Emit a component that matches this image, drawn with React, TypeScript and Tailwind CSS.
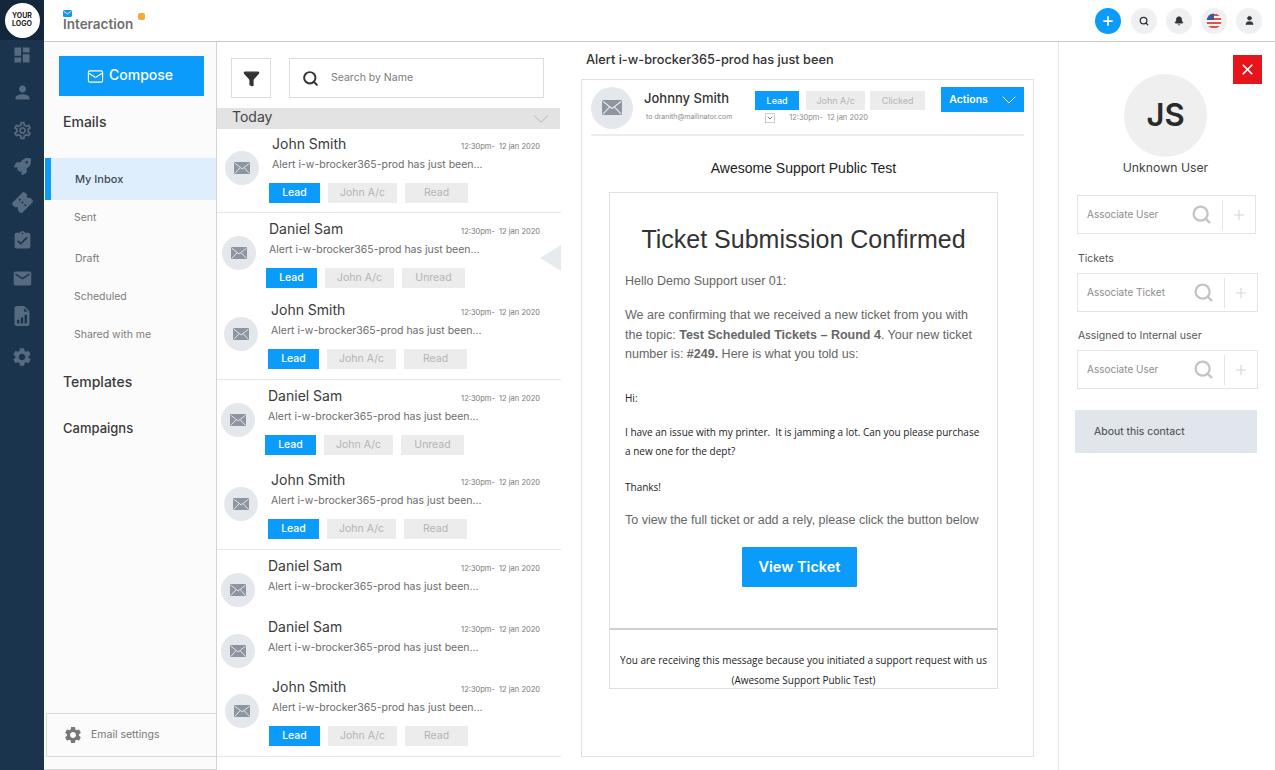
import { Search, Plus, Bell, User, X, ChevronDown, Mail, Filter } from "lucide-react";
import { MdDashboard, MdPerson, MdOutlineSettings, MdConfirmationNumber, MdAssignmentTurnedIn, MdEmail, MdSettings } from "react-icons/md";
import { FaRocket } from "react-icons/fa";
import { BsFileEarmarkBarGraphFill } from "react-icons/bs";

const SANS = "font-['Inter','Noto_Sans',sans-serif]";

// left offsets differ a bit per row, so each row carries its own
type Row = { name: string; status: string; h: number; x: number; line?: boolean };

const ROWS: Row[] = [
  { name: "John Smith", status: "Read", h: 85, x: 0, line: true },
  { name: "Daniel Sam", status: "Unread", h: 81, x: -3 },
  { name: "John Smith", status: "Read", h: 86, x: -1, line: true },
  { name: "Daniel Sam", status: "Unread", h: 84, x: -4 },
  { name: "John Smith", status: "Read", h: 86, x: -1, line: true },
  { name: "Daniel Sam", status: "", h: 61, x: -4 },
  { name: "Daniel Sam", status: "", h: 60, x: -4 },
  { name: "John Smith", status: "Read", h: 86, x: 0, line: true },
];

function EnvelopeBadge({ size = 34 }: { size?: number }) {
  return (
    <div
      className="flex shrink-0 items-center justify-center rounded-full bg-[#e4e7ec]"
      style={{ width: size, height: size }}
    >
      <svg width={size * 0.48} height={size * 0.36} viewBox="0 0 20 15">
        <rect width="20" height="15" rx="1.5" fill="#8e959e" />
        <path d="M1 1.5 10 8.5 19 1.5M1 14 7.5 7M19 14 12.5 7" fill="none" stroke="#e4e7ec" strokeWidth="1.2" />
      </svg>
    </div>
  );
}

function Tag({ label, blue, w }: { label: string; blue?: boolean; w: number }) {
  return (
    <span
      className={`flex h-[20px] items-center justify-center text-[10.5px] ${blue ? "bg-[#0a9bfb] font-medium text-white" : "bg-[#ececec] text-[#b4b4b4]"}`}
      style={{ width: w }}
    >
      {label}
    </span>
  );
}

function MessageRow({ row }: { row: Row }) {
  return (
    <div
      className={`relative flex shrink-0 flex-col ${row.line ? "border-b border-[#e6e6e6]" : ""}`}
      style={{ height: row.h, paddingLeft: row.x + 8 }}
    >
      <div className="flex items-start gap-[13px] pt-[6px]">
        <div className="pt-[17px]">
          <EnvelopeBadge />
        </div>
        <div className="min-w-0 flex-1">
          <div className="flex items-baseline justify-between pr-[21px]">
            <span className="text-[14px] leading-[20px] text-[#3a3a3a]">{row.name}</span>
            <span className="text-[7.5px] text-[#777]">12:30pm-&nbsp; 12 jan 2020</span>
          </div>
          <p className="mt-[4px] text-[10.5px] leading-[14px] text-[#6b6b6b]">Alert i-w-brocker365-prod has just been...</p>
        </div>
      </div>
      {row.status && (
        <div className="-mt-[2px] flex gap-[8px] pl-[44px]">
          <Tag label="Lead" blue w={51} />
          <Tag label="John A/c" w={69} />
          <Tag label={row.status} w={63} />
        </div>
      )}
    </div>
  );
}

function AssociateField({ label, w = 181 }: { label: string; w?: number }) {
  return (
    <div className="flex h-[39px] items-center border border-[#e4e4e4] pl-[9px] text-[10px] text-[#8c8c8c]" style={{ width: w }}>
      <span className="flex-1">{label}</span>
      <Search className="mr-[10px] h-[21px] w-[21px] text-[#c4c4c4]" strokeWidth={2.6} />
      <div className="flex h-[30px] w-[33px] items-center justify-center border-l border-[#e4e4e4]">
        <Plus className="h-[16px] w-[16px] text-[#d4d4d4]" strokeWidth={1.6} />
      </div>
    </div>
  );
}

function TopIcon({ children }: { children: React.ReactNode }) {
  return <div className="flex h-[26px] w-[26px] items-center justify-center rounded-full bg-[#eef0f2]">{children}</div>;
}

export default function App() {
  return (
    <div className={`flex h-[770px] w-[1275px] overflow-hidden bg-white ${SANS}`}>
      {/* dark icon rail */}
      <aside className="flex w-[44px] shrink-0 flex-col items-center bg-[#1b344e]">
        <div className="flex h-[40px] w-full items-center justify-center bg-[#13263a]">
          <div className="flex h-[35px] w-[35px] items-center justify-center rounded-full bg-white text-center text-[7px] font-bold leading-[8px] text-[#222]">
            YOUR<br />LOGO
          </div>
        </div>
        <div className="mt-[5px] flex flex-col items-center gap-[17px] text-[#566b7f]">
          <MdDashboard className="h-[20px] w-[20px]" />
          <MdPerson className="h-[21px] w-[21px]" />
          <MdOutlineSettings className="h-[21px] w-[21px]" />
          <FaRocket className="h-[17px] w-[17px]" />
          <MdConfirmationNumber className="h-[21px] w-[21px] -rotate-45" />
          <MdAssignmentTurnedIn className="h-[21px] w-[21px]" />
          <MdEmail className="h-[21px] w-[21px]" />
          <BsFileEarmarkBarGraphFill className="h-[20px] w-[20px]" />
          <MdSettings className="mt-[3px] h-[22px] w-[22px]" />
        </div>
      </aside>

      <div className="flex min-w-0 flex-1 flex-col">
        {/* top bar */}
        <header className="flex h-[42px] shrink-0 items-center border-b border-[#c9c9c9] pl-[19px] pr-[13px]">
          <div className="relative leading-none">
            <svg className="mb-[1px]" width="9" height="7" viewBox="0 0 9 7">
              <rect width="9" height="7" rx="1.5" fill="#1497e6" />
              <path d="M1 1.5 4.5 4 8 1.5" fill="none" stroke="#fff" strokeWidth=".8" />
            </svg>
            <div className="text-[13.5px] font-semibold text-[#6f6f6f]">Interaction</div>
            <span className="absolute left-[75px] top-[3px] h-[7px] w-[7px] rounded-[2px] bg-[#f5a93b]" />
          </div>
          <div className="ml-auto flex items-center gap-[9px]">
            <div className="mr-[1px] flex h-[26px] w-[26px] items-center justify-center rounded-full bg-[#0a9bfb]">
              <Plus className="h-[14px] w-[14px] text-white" strokeWidth={3} />
            </div>
            <TopIcon><Search className="h-[10px] w-[10px] text-[#333]" strokeWidth={3} /></TopIcon>
            <TopIcon><Bell className="h-[10px] w-[10px] fill-[#333] text-[#333]" /></TopIcon>
            <TopIcon>
              <svg width="16" height="16" viewBox="0 0 16 16">
                <clipPath id="flag"><circle cx="8" cy="8" r="7.5" /></clipPath>
                <g clipPath="url(#flag)">
                  <rect width="16" height="16" fill="#f4f4f4" />
                  <path d="M0 2h16M0 6h16M0 10h16M0 14h16" stroke="#d9534f" strokeWidth="2" />
                  <rect width="8" height="7" fill="#3f5a9a" />
                </g>
              </svg>
            </TopIcon>
            <TopIcon><User className="h-[11px] w-[11px] fill-[#333] text-[#333]" /></TopIcon>
          </div>
        </header>

        <div className="flex min-h-0 flex-1">
          {/* mailbox nav */}
          <nav className="flex w-[173px] shrink-0 flex-col border-b border-r border-[#d4d4d4] bg-[#fbfbfb]">
            <button className="ml-[15px] mt-[14px] flex h-[40px] w-[145px] items-center justify-center gap-[5px] bg-[#0a9bfb] pb-[3px] pr-[3px] text-[14px] font-medium text-white">
              <Mail className="mt-[3px] h-[17px] w-[17px]" strokeWidth={1.6} /> Compose
            </button>
            <h2 className="ml-[19px] mt-[16px] text-[14px] font-medium leading-[20px] text-[#3a3a3a]">Emails</h2>
            <div className="ml-[1px] mt-[26px] flex h-[42px] items-center border-l-[6px] border-[#0a9bfb] bg-[#deeefc] pl-[24px] text-[11px] font-medium text-[#3d4a57]">
              My Inbox
            </div>
            <div className="flex flex-col text-[10.5px] text-[#7c7c7c]">
              <span className="flex h-[35px] items-center pl-[30px]">Sent</span>
              <span className="flex h-[48px] items-center pl-[31px]">Draft</span>
              <span className="flex h-[28px] items-center pl-[30px]">Scheduled</span>
              <span className="flex h-[48px] items-center pl-[30px]">Shared with me</span>
            </div>
            <h2 className="ml-[19px] mt-[13px] text-[14px] font-medium leading-[20px] text-[#3a3a3a]">Templates</h2>
            <h2 className="ml-[19px] mt-[26px] text-[13px] font-medium leading-[20px] text-[#3a3a3a]">Campaigns</h2>
            <div className="mb-[12px] ml-[2px] mt-auto flex h-[44px] items-center gap-[8px] border-y border-l border-[#d9d9d9] pl-[16px] text-[10.5px] text-[#777]">
              <MdSettings className="h-[20px] w-[20px] text-[#777]" /> Email settings
            </div>
          </nav>

          {/* message list */}
          <section className="relative flex w-[344px] shrink-0 flex-col">
            <div className="flex h-[66px] shrink-0 items-center pl-[14px] pt-[6px]">
              <div className="flex h-[40px] w-[40px] items-center justify-center border border-[#dcdcdc]">
                <Filter className="h-[17px] w-[17px] fill-[#333] text-[#333]" />
              </div>
              <div className="ml-[18px] flex h-[40px] w-[255px] items-center border border-[#dcdcdc] pl-[12px] text-[10.5px] text-[#7c7c7c]">
                <Search className="mr-[12px] h-[17px] w-[17px] text-[#333]" strokeWidth={2.8} />
                Search by Name
              </div>
            </div>
            <div className="mr-[1px] flex h-[21px] shrink-0 items-center justify-between bg-[#e3e3e3] pb-[4px] pl-[15px] pr-[6px] text-[14px] text-[#444]">
              Today
              <ChevronDown className="mt-[4px] h-[26px] w-[26px] text-[#aaa]" strokeWidth={0.8} />
            </div>
            <div className="-mt-[1px] flex flex-col">
              {ROWS.map((row, i) => (
                <MessageRow key={i} row={row} />
              ))}
            </div>
            {/* collapse handle over the list's edge */}
            <div className="absolute right-0 top-[203px] h-0 w-0 border-y-[13px] border-r-[21px] border-y-transparent border-r-[#e8ebee]" />
          </section>

          {/* reading pane */}
          <main className="flex w-[497px] shrink-0 flex-col pl-[20px] pr-[24px]">
            <h1 className="ml-[5px] mt-[9px] text-[12.75px] font-medium leading-[18px] text-[#333]">Alert i-w-brocker365-prod has just been</h1>
            <div className="mb-[13px] mt-[10px] flex min-h-0 flex-1 flex-col border border-[#dfe3e7] px-[9px]">
              <div className="flex h-[56px] shrink-0 items-start border-b-2 border-[#ececec] pt-[7px]">
                <EnvelopeBadge size={42} />
                <div className="ml-[11px] w-[113px] pt-[2px]">
                  <div className="text-[13px] font-medium leading-[18px] text-[#333]">Johnny Smith</div>
                  <div className="ml-[2px] mt-[5px] whitespace-nowrap text-[7px] text-[#8a8a8a]">to dranith@mailinator.com</div>
                </div>
                <div className="w-[176px]">
                  <div className="flex pt-[4px]">
                    <span className="flex h-[19px] w-[44px] items-center justify-center bg-[#0a9bfb] text-[9px] font-medium text-white">Lead</span>
                    <span className="ml-[7px] flex h-[19px] w-[59px] items-center justify-center bg-[#ececec] text-[9px] text-[#b4b4b4]">John A/c</span>
                    <span className="ml-[5px] flex h-[19px] w-[55px] items-center justify-center bg-[#ececec] text-[9px] text-[#b4b4b4]">Clicked</span>
                  </div>
                  <div className="mt-[2px] flex items-center pl-[10px] text-[7.5px] text-[#8a8a8a]">
                    <span className="mr-[14px] flex h-[10px] w-[10px] items-center justify-center border border-[#ccc]">
                      <ChevronDown className="h-[8px] w-[8px] text-[#444]" />
                    </span>
                    12:30pm-&nbsp; 12 jan 2020
                  </div>
                </div>
                <button className="ml-[13px] flex h-[25px] w-[84px] items-center justify-between bg-[#0a9bfb] pl-[8px] pr-[3px] text-[10.5px] font-semibold text-white">
                  Actions
                  <ChevronDown className="h-[24px] w-[24px]" strokeWidth={1} />
                </button>
              </div>
              <div className="pr-[8px] font-['Liberation_Sans',Arial,sans-serif]">
                <div className="mt-[22px] text-center text-[14px] leading-[20px] text-[#222]">Awesome Support Public Test</div>
                <div className="mx-[18px] mt-[14px] h-[497px] overflow-hidden border border-[#e0e0e0]">
                  <div className="px-[15px]">
                    <div className="mt-[29px] whitespace-nowrap text-center text-[25px] leading-[34px] text-[#333]">Ticket Submission Confirmed</div>
                    <p className="mt-[16px] text-[12.5px] leading-[18px] text-[#666]">Hello Demo Support user 01:</p>
                    <p className="mt-[16px] text-[12.5px] leading-[19.5px] text-[#666]">
                      We are confirming that we received a new ticket from you with the topic: <b>Test Scheduled Tickets – Round 4</b>. Your new ticket number is: <b>#249.</b> Here is what you told us:
                    </p>
                    <div className="font-['Open_Sans',sans-serif] text-[10px] text-[#222]">
                      <p className="mt-[26px] leading-[14px]">Hi:</p>
                      <p className="mt-[18px] leading-[19px]">I have an issue with my printer.&nbsp; It is jamming a lot. Can you please purchase a new one for the dept?</p>
                      <p className="mt-[19px] leading-[14px]">Thanks!</p>
                    </div>
                    <p className="mt-[17px] whitespace-nowrap text-[12.5px] leading-[18px] text-[#666]">To view the full ticket or add a rely, please click the button below</p>
                    <button className={`ml-[117px] mt-[18px] flex h-[40px] w-[115px] items-center justify-center rounded-[1px] bg-[#0a9bfb] text-[14.5px] font-semibold text-white ${SANS}`}>View Ticket</button>
                    <div className="-mx-[15px] mt-[41px] border-t-2 border-[#cfcfcf]" />
                    <p className="-mx-[15px] mt-[20px] whitespace-nowrap text-center font-['Open_Sans',sans-serif] text-[10px] leading-[20px] text-[#222]">
                      You are receiving this message because you initiated a support request with us<br />(Awesome Support Public Test)
                    </p>
                  </div>
                </div>
              </div>
            </div>
          </main>

          {/* contact panel */}
          <aside className="flex flex-1 flex-col border-l border-[#e3e3e3] pl-[18px]">
            <div className="relative">
              <div className="absolute right-[13px] top-[13px] flex h-[29px] w-[29px] items-center justify-center bg-[#e8141c]">
                <X className="h-[17px] w-[17px] text-white" strokeWidth={2.4} />
              </div>
            </div>
            <div className="ml-[47px] mt-[32px] flex h-[83px] w-[83px] items-center justify-center rounded-full bg-[#efefef] text-[31px] font-semibold text-[#2a2a2a]">JS</div>
            <div className="mt-[3px] w-[177px] text-center text-[12.25px] leading-[16px] text-[#444]">Unknown User</div>
            <div className="mt-[19px]"><AssociateField label="Associate User" w={179} /></div>
            <div className="ml-[1px] mt-[18px] text-[10.5px] leading-[14px] text-[#555]">Tickets</div>
            <div className="mt-[7px]"><AssociateField label="Associate Ticket" /></div>
            <div className="ml-[1px] mt-[17px] text-[10.5px] leading-[14px] text-[#555]">Assigned to Internal user</div>
            <div className="mt-[7px]"><AssociateField label="Associate User" /></div>
            <div className="-ml-[2px] mt-[21px] flex h-[43px] w-[182px] items-center bg-[#e1e5ec] pl-[19px] text-[10.5px] text-[#444]">About this contact</div>
          </aside>
        </div>
      </div>
    </div>
  );
}
